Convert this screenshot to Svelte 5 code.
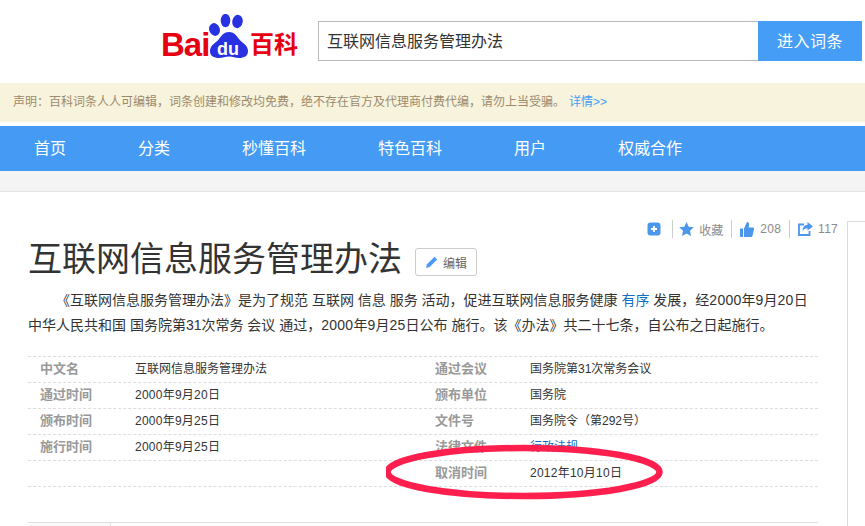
<script>
  const nav = ["首页", "分类", "秒懂百科", "特色百科", "用户", "权威合作"];
  const rows = [
    ["中文名", "互联网信息服务管理办法", "通过会议", "国务院第31次常务会议"],
    ["通过时间", "2000年9月20日", "颁布单位", "国务院"],
    ["颁布时间", "2000年9月25日", "文件号", "国务院令（第292号）"],
    ["施行时间", "2000年9月25日", "法律文件", "行政法规"],
    ["", "", "取消时间", "2012年10月10日"]
  ];
  const isDate = (s) => /^\d{4}年/.test(s);
</script>

<div class="page">
  <header class="top">
    <div class="logo">
      <span class="bai">Bai</span>
      <span class="paw">
        <svg width="42" height="45" viewBox="0 0 42 45">
          <ellipse cx="6.500" cy="15.500" rx="5.300" ry="6.500" fill="#2932e1" transform="rotate(-20 6.500 15.500)"/>
          <ellipse cx="17.500" cy="6.500" rx="4.800" ry="6.700" fill="#2932e1"/>
          <ellipse cx="29.500" cy="7.500" rx="5.200" ry="6.700" fill="#2932e1" transform="rotate(10 29.500 7.500)"/>
          <path d="M21 18c5 0 7 3 10 7 3 4 9 6 9 12 0 5-4 7-9 7-4 0-6-1.500-10-1.500S15 44 11 44c-5 0-9-2-9-7 0-6 6-8 9-12 3-4 5-7 10-7z" fill="#2932e1"/>
        </svg>
        <span class="du">du</span>
      </span>
      <span class="ke">百科</span>
    </div>
    <div class="search">
      <div class="input">互联网信息服务管理办法</div>
      <div class="go">进入词条</div>
    </div>
  </header>

  <div class="notice">
    <span>声明：百科词条人人可编辑，词条创建和修改均免费，绝不存在官方及代理商付费代编，请勿上当受骗。</span>
    <a class="more">详情&gt;&gt;</a>
  </div>

  <nav class="nav">
    {#each nav as label}
      <span class="nav-item">{label}</span>
    {/each}
  </nav>
  <div class="band"></div>

  <main class="body">
    <div class="content">
      <div class="actions">
        <svg class="ico plus" width="14" height="14" viewBox="0 0 14 14"><rect x="0.500" y="0.500" width="13" height="13" rx="3" fill="#4c96ec"/><path d="M7 4v6M4 7h6" stroke="#fff" stroke-width="1.800"/></svg>
        <i class="sep"></i>
        <svg class="ico star" width="15" height="14" viewBox="0 0 15 14"><path d="M7.500 0l2.200 4.700 5.100.6-3.800 3.500 1 5.200-4.500-2.600L3 14l1-5.200L.2 5.300l5.100-.6z" fill="#4c96ec"/></svg>
        <span class="count fav">收藏</span>
        <i class="sep"></i>
        <svg class="ico" width="14" height="15" viewBox="0 0 14 15"><path d="M0 6.500h3V15H1a1 1 0 0 1-1-1zM4 6.500 7 0c1.500 0 2.300 1 2 2.500L8.700 5.500H13c1 0 1.300 1 1 2l-1.500 6.300c-.2.800-.8 1.200-1.500 1.200H4z" fill="#4c96ec"/></svg>
        <span class="count num">208</span>
        <i class="sep"></i>
        <svg class="ico" width="15" height="14" viewBox="0 0 15 14"><path d="M6 2.500H1v10.500h10.500V9" fill="none" stroke="#4c96ec" stroke-width="1.800"/><path d="M9.500 0 15 4.500 9.500 8.500V6.300C7 6.300 5.500 7.300 4.500 9c0-3.500 2-6 5-6.200z" fill="#4c96ec"/></svg>
        <span class="count num tail">117</span>
      </div>

      <div class="title-row">
        <h1>互联网信息服务管理办法</h1>
        <button class="edit">
          <svg width="13" height="13" viewBox="0 0 13 13"><path d="M9.500.8l2.700 2.700-7.500 7.500L1 12l1-3.700z" fill="#4c9bf8"/></svg>
          编辑
        </button>
      </div>

      <p class="intro">《互联网信息服务管理办法》是为了规范 互联网 信息 服务 活动，促进互联网信息服务健康 <a>有序</a> 发展，经<span class="num">2000</span>年<span class="num">9</span>月<span class="num">20</span>日中华人民共和国 国务院第31次常务 会议 通过，<span class="num">2000</span>年<span class="num">9</span>月<span class="num">25</span>日公布 施行。该《办法》共二十七条，自公布之日起施行。</p>

      <div class="facts">
        {#each rows as r, i}
          <div class="fact">
            <span class="k">{r[0]}</span><span class="v" class:num={isDate(r[1])}>{r[1]}</span>
            <span class="k">{r[2]}</span><span class="v last" class:num={isDate(r[3])} class:link={i === 3}>{r[3]}</span>
          </div>
        {/each}
        <svg class="ring" width="290" height="64" viewBox="0 0 290 64"><ellipse cx="137.500" cy="28" rx="136" ry="24" fill="none" stroke="#ff1f4e" stroke-width="6.500"/></svg>
      </div>

      <div class="catalog"><div class="cat-head"></div></div>
    </div>
    <aside class="side"></aside>
  </main>
</div>

<style>
  :global(body) { margin: 0; background: #fff; }
  .page {
    width: 865px; height: 526px; overflow: hidden;
    font-family: "Liberation Sans", "Noto Sans CJK SC", sans-serif; color: #333;
  }
  .top { height: 83px; display: flex; align-items: flex-start; padding-left: 163px; box-sizing: border-box; }
  .logo { width: 155px; height: 83px; display: flex; align-items: flex-start; position: relative; color: #e60012; flex: none; }
  .bai { font-size: 33px; font-weight: 700; line-height: 30px; margin-top: 30px; margin-left: -2px; width: 47px; letter-spacing: -1px; flex: none; }
  .paw { position: relative; width: 42px; height: 45px; margin-top: 14px; flex: none; }
  .paw svg { display: block; }
  .du { position: absolute; left: 9px; top: 25px; color: #fff; font-size: 18px; font-weight: 700; line-height: 20px; }
  .ke { font-size: 24px; font-weight: 700; line-height: 28px; margin-top: 31px; white-space: nowrap; }
  .search { display: flex; margin-top: 21px; height: 40px; }
  .input {
    width: 440px; box-sizing: border-box; border: 1px solid #b9b9b9; border-right: 0;
    padding-left: 8px; font-size: 16px; line-height: 40px; color: #333;
  }
  .go { width: 104px; background: #459df5; color: #fff; font-size: 16px; line-height: 41px; text-align: center; letter-spacing: 0.5px; }

  .notice {
    height: 39px; background: #f8f3dc; color: #9b8a6c; font-size: 12px; line-height: 38px;
    padding-left: 13px; display: flex; gap: 3px; white-space: nowrap;
  }
  .more { color: #459df5; font-size: 12px; margin-left: 1px; }
  .nav {
    height: 45px; margin-top: 4px; background: #459bf3; display: flex; gap: 72px; padding-left: 34px;
    color: #fff; font-size: 16px; line-height: 45px;
  }
  .nav-item { flex: none; }
  .band { height: 20px; background: #f4f4f4; border-bottom: 1px solid #e4e4e4; }

  .body { display: flex; height: 334px; }
  .content { width: 790px; margin-left: 28px; flex: none; position: relative; }
  .side { width: 18px; margin-left: 29px; margin-top: 29px; border: 1px solid #dcdcdc; border-right: 0; border-bottom: 0; }

  .actions {
    display: flex; justify-content: flex-end; align-items: center; height: 16px; margin-top: 29px;
    color: #8a8a8a; font-size: 12px; margin-right: -20px;
  }
  .ico { flex: none; }
  .plus { margin-right: 3px; }
  .star { margin-left: -2px; }
  .sep { width: 1px; height: 18px; background: #ccc; margin: 0 8px; }
  .count { margin-left: 6px; font-size: 12px; white-space: nowrap; }
  .count.fav { margin-left: 5px; }
  .count.tail { margin-left: 5px; }
  .title-row { display: flex; align-items: center; height: 44px; }
  h1 { margin: 0; font-size: 34px; font-weight: 400; line-height: 44px; color: #333; }
  .edit {
    margin-left: 13px; margin-top: 6px; width: 62px; height: 28px; border: 1px solid #ccc; border-radius: 3px; background: #fff;
    font: 12px "Liberation Sans", "Noto Sans CJK SC", sans-serif; color: #666; display: flex; align-items: center; justify-content: center; gap: 5px; padding: 0;
  }
  .intro { margin: 7px 0 0; font-size: 14px; line-height: 25px; text-indent: 2em; color: #333; width: 785px; }
  .intro a { color: #136ec2; }
  .num { letter-spacing: 0.25px; }
  .facts { position: relative; margin-top: 18px; border-top: 1px dashed #ddd; }
  .fact { display: flex; height: 25px; line-height: 25px; border-bottom: 1px dashed #ddd; font-size: 12px; }
  .k { width: 107px; padding-left: 12px; box-sizing: border-box; font-size: 13px; line-height: 23px; font-weight: 700; color: #999; flex: none; }
  .v { width: 288px; flex: none; color: #333; white-space: nowrap; }
  .v.last { width: auto; }
  .link { color: #136ec2; }
  .ring { position: absolute; left: 358px; top: 87px; }
  .catalog { margin-top: 35px; border-top: 1px solid #e0e0e0; height: 10px; }
  .cat-head { width: 82px; height: 10px; background: #fafafa; border-right: 1px solid #e0e0e0; }
</style>
